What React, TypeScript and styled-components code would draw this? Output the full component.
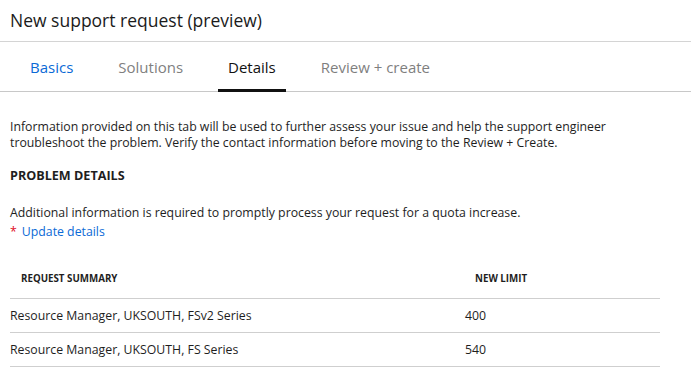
import React from "react";
import styled, { createGlobalStyle } from "styled-components";

const Global = createGlobalStyle`
  html, body { margin: 0; padding: 0; background: #fff; }
  body { font-family: "Open Sans", "Noto Sans", Arial, sans-serif; color: #000; }
`;

const Page = styled.div`
  width: 691px;
  height: 388px;
  overflow: hidden;
  background: #fff;
`;

const Header = styled.div`
  display: flex;
  align-items: center;
  border-bottom: 1px solid #d4d4d4;
  box-sizing: border-box;
  margin-top: -8px;
  height: 50px;
  padding: 6px 10px 0;
`;

const Title = styled.h1`
  margin: 0;
  font-size: 17.5px;
  font-weight: 400;
  color: #1b1b1b;
`;

const Tabs = styled.div`
  display: flex;
  gap: 25px;
  padding: 0 20px;
  height: 50px;
  border-bottom: 1px solid #c8c8c8;
  box-sizing: border-box;
`;

const Tab = styled.div<{ $state: "link" | "muted" | "active" }>`
  display: flex;
  align-items: center;
  padding: 3px 10px 0;
  font-size: 15px;
  color: ${(p) => (p.$state === "link" ? "#0b6ad6" : p.$state === "active" ? "#111" : "#7f7f7f")};
  border-bottom: 3px solid ${(p) => (p.$state === "active" ? "#111" : "transparent")};
  margin-bottom: -1px;
`;

const Body = styled.div`
  padding: 0 10px;
  font-size: 12.3px;
  color: #1e1e1e;
`;

const Para = styled.p`
  margin: 27px 0 0;
  line-height: 16px;
`;

const Section = styled.h2`
  margin: 17px 0 0;
  font-size: 12.6px;
  font-weight: 700;
  line-height: 16px;
`;

const Info = styled.p`
  margin: 21px 0 0;
  line-height: 16px;
`;

const Link = styled.div`
  display: flex;
  gap: 5px;
  line-height: 16px;
  margin-top: 3px;
  color: #0b6ad6;
`;

const Star = styled.span`
  color: #e00b1c;
`;

const Table = styled.div`
  width: 650px;
  margin-top: 25px;
`;

const Row = styled.div<{ $head?: boolean }>`
  display: grid;
  grid-template-columns: 455px 1fr;
  height: 34px;
  align-items: center;
  border-bottom: 1px solid #cfcfcf;
  box-sizing: border-box;
  padding-bottom: ${(p) => (p.$head ? "7px" : "0")};
  font-size: ${(p) => (p.$head ? "9.75px" : "12.3px")};
  font-weight: ${(p) => (p.$head ? 700 : 400)};
`;

const Cell = styled.div<{ $indent?: number }>`
  padding-left: ${(p) => p.$indent ?? 0}px;
`;

const rows = [
  ["Resource Manager, UKSOUTH, FSv2 Series", "400"],
  ["Resource Manager, UKSOUTH, FS Series", "540"],
];

export default function App() {
  return (
    <Page>
      <Global />
      <Header>
        <Title>New support request (preview)</Title>
      </Header>
      <Tabs>
        <Tab $state="link">Basics</Tab>
        <Tab $state="muted">Solutions</Tab>
        <Tab $state="active">Details</Tab>
        <Tab $state="muted">Review + create</Tab>
      </Tabs>
      <Body>
        <Para>
          Information provided on this tab will be used to further assess your issue and help the support engineer
          <br />
          troubleshoot the problem. Verify the contact information before moving to the Review + Create.
        </Para>
        <Section>PROBLEM DETAILS</Section>
        <Info>Additional information is required to promptly process your request for a quota increase.</Info>
        <Link>
          <Star>*</Star>
          <span>Update details</span>
        </Link>
        <Table>
          <Row $head>
            <Cell $indent={11}>REQUEST SUMMARY</Cell>
            <Cell $indent={10}>NEW LIMIT</Cell>
          </Row>
          {rows.map(([a, b]) => (
            <Row key={a}>
              <Cell>{a}</Cell>
              <Cell>{b}</Cell>
            </Row>
          ))}
        </Table>
      </Body>
    </Page>
  );
}
